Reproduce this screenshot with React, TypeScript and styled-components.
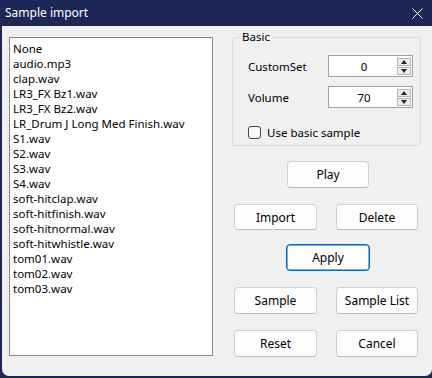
import React from "react";
import styled, { createGlobalStyle } from "styled-components";

const Global = createGlobalStyle`
  html, body { margin: 0; padding: 0; background: #1c2756; }
  body { font-family: "Noto Sans", "Segoe UI", Arial, sans-serif; font-size: 11.5px; color: #000; }
  * { box-sizing: border-box; }
`;

const Window = styled.div`
  width: 432px;
  height: 378px;
  background: #1c2756;
  display: flex;
  flex-direction: column;
  overflow: hidden;
`;

const TitleBar = styled.div`
  height: 26px;
  flex: none;
  display: flex;
  align-items: center;
  justify-content: space-between;
  padding: 0 9px 1px 5px;
  color: #ffffff;
  font-size: 12px;
`;

const CloseIcon = styled.svg`
  width: 11px;
  height: 11px;
  margin-top: 1px;
`;

const Body = styled.div`
  flex: 1;
  margin: 0 0 2px 2px;
  background: #f0f0f0;
  border-radius: 0 0 7px 7px;
  display: flex;
  align-items: flex-start;
  padding: 3px 0 0 7px;
  gap: 19px;
`;

const ListBox = styled.ul`
  list-style: none;
  margin: 8px 0 0 0;
  width: 204px;
  height: 319px;
  background: #ffffff;
  border: 1px solid #828790;
  padding: 3px 3px 2px;
  overflow: hidden;
`;

const ListItem = styled.li`
  height: 15px;
  line-height: 15px;
  white-space: nowrap;
`;

const RightColumn = styled.div`
  width: 189px;
  display: flex;
  flex-direction: column;
`;

const Group = styled.fieldset`
  margin: 0;
  width: 189px;
  border: 1px solid #dcdcdc;
  border-radius: 2px;
  padding: 10px 7px 6px 6px;
`;

const Legend = styled.legend`
  margin-left: 1px;
  padding: 0 2px;
  line-height: 16px;
`;

const GroupGrid = styled.div`
  padding-left: 9px;
  display: grid;
  grid-template-columns: 80px 85px;
  row-gap: 9px;
  align-items: center;
`;

const Label = styled.span``;

const SpinBox = styled.div`
  height: 22px;
  background: #ffffff;
  border: 1px solid #a0a0a0;
  display: flex;
  align-items: center;
  padding: 0 1px 0 0;
`;

const SpinValue = styled.span`
  flex: 1;
  text-align: center;
  padding-left: 2px;
`;

const SpinButtons = styled.div`
  width: 14px;
  display: flex;
  flex-direction: column;
  gap: 1px;
`;

const SpinButton = styled.div`
  height: 8px;
  background: #ececec;
  border: 1px solid #b5b5b5;
  display: flex;
  align-items: center;
  justify-content: center;
`;

const Arrow = styled.svg`
  width: 6px;
  height: 4px;
`;

const CheckRow = styled.label`
  grid-column: 1 / span 2;
  height: 14px;
  margin-top: 8px;
  display: flex;
  align-items: center;
  gap: 6px;
`;

const CheckBox = styled.span`
  width: 13px;
  height: 13px;
  flex: none;
  border: 1px solid #444;
  border-radius: 3px;
  background: #f8f8f8;
`;

const Buttons = styled.div`
  margin-top: 15px;
  padding-left: 2px;
  display: grid;
  grid-template-columns: 83px 82px;
  column-gap: 19px;
`;

const ButtonRow = styled.div<{ $single?: boolean; $tight?: boolean }>`
  grid-column: 1 / span 2;
  display: flex;
  justify-content: ${(p) => (p.$single ? "center" : "space-between")};
  padding-left: ${(p) => (p.$single ? "4px" : "0")};
  margin-top: ${(p) => (p.$tight ? "14px" : "16px")};
  &:first-child { margin-top: 0; }
`;

const Button = styled.button<{ $primary?: boolean; $w?: number; $h?: number }>`
  width: ${(p) => p.$w ?? 83}px;
  height: ${(p) => p.$h ?? 27}px;
  font-family: inherit;
  font-size: 12px;
  color: #000;
  background: #fdfdfd;
  border: 1px solid ${(p) => (p.$primary ? "#0067c0" : "#d0d0d0")};
  border-bottom-color: ${(p) => (p.$primary ? "#0067c0" : "#bcbcbc")};
  box-shadow: ${(p) => (p.$primary ? "inset 0 0 0 0.5px #0067c0" : "none")};
  border-radius: 4px;
  padding: 0;
`;

const items = [
  "None",
  "audio.mp3",
  "clap.wav",
  "LR3_FX Bz1.wav",
  "LR3_FX Bz2.wav",
  "LR_Drum J Long Med Finish.wav",
  "S1.wav",
  "S2.wav",
  "S3.wav",
  "S4.wav",
  "soft-hitclap.wav",
  "soft-hitfinish.wav",
  "soft-hitnormal.wav",
  "soft-hitwhistle.wav",
  "tom01.wav",
  "tom02.wav",
  "tom03.wav",
];

function Spin({ value }: { value: string }) {
  return (
    <SpinBox>
      <SpinValue>{value}</SpinValue>
      <SpinButtons>
        <SpinButton>
          <Arrow viewBox="0 0 6 4">
            <path d="M3 0 L6 4 L0 4 Z" fill="#222" />
          </Arrow>
        </SpinButton>
        <SpinButton>
          <Arrow viewBox="0 0 6 4">
            <path d="M0 0 L6 0 L3 4 Z" fill="#222" />
          </Arrow>
        </SpinButton>
      </SpinButtons>
    </SpinBox>
  );
}

export default function App() {
  return (
    <>
      <Global />
      <Window>
        <TitleBar>
          <span>Sample import</span>
          <CloseIcon viewBox="0 0 11 11">
            <path d="M0.5 0.5 L10.5 10.5 M10.5 0.5 L0.5 10.5" stroke="#fff" strokeWidth="1" />
          </CloseIcon>
        </TitleBar>
        <Body>
          <ListBox>
            {items.map((it) => (
              <ListItem key={it}>{it}</ListItem>
            ))}
          </ListBox>
          <RightColumn>
            <Group>
              <Legend>Basic</Legend>
              <GroupGrid>
                <Label>CustomSet</Label>
                <Spin value="0" />
                <Label>Volume</Label>
                <Spin value="70" />
                <CheckRow>
                  <CheckBox />
                  <span>Use basic sample</span>
                </CheckRow>
              </GroupGrid>
            </Group>
            <Buttons>
              <ButtonRow $single>
                <Button $w={82}>Play</Button>
              </ButtonRow>
              <ButtonRow>
                <Button $h={26}>Import</Button>
                <Button $w={82} $h={26}>Delete</Button>
              </ButtonRow>
              <ButtonRow $single $tight>
                <Button $primary $w={84}>Apply</Button>
              </ButtonRow>
              <ButtonRow>
                <Button>Sample</Button>
                <Button $w={82}>Sample List</Button>
              </ButtonRow>
              <ButtonRow>
                <Button>Reset</Button>
                <Button $w={82}>Cancel</Button>
              </ButtonRow>
            </Buttons>
          </RightColumn>
        </Body>
      </Window>
    </>
  );
}
